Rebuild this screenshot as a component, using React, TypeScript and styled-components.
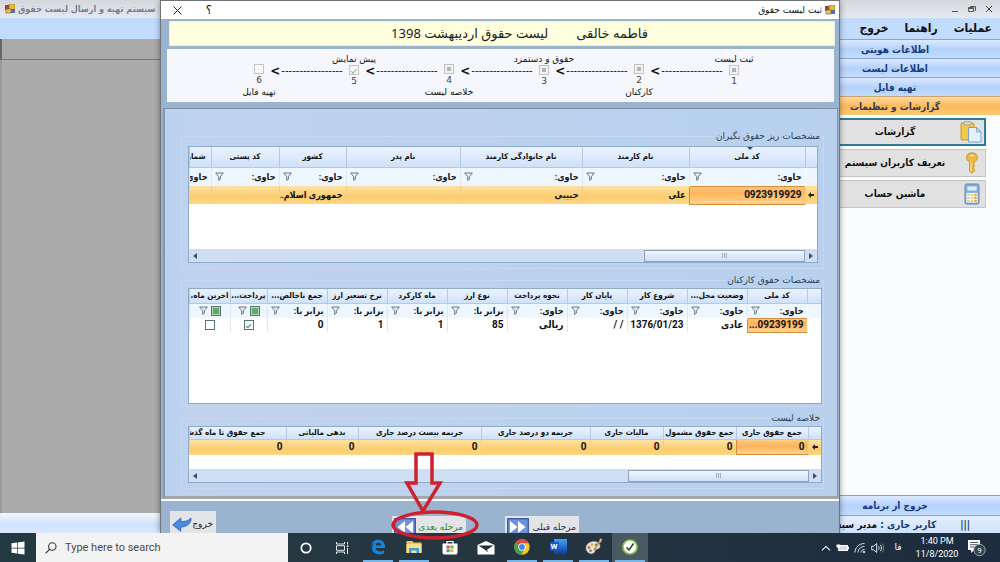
import React from "react";
import styled, { createGlobalStyle, css } from "styled-components";

const Global = createGlobalStyle`
  *, *::before, *::after { box-sizing: border-box; }
  body { margin: 0; font-family: Roboto, "DejaVu Sans", sans-serif; color: #111; overflow: hidden; }
  button, input { font: inherit; color: inherit; margin: 0; padding: 0; border: 0; background: none; }
`;

const boldFamily = `"DejaVu Sans Condensed", "DejaVu Sans", sans-serif`;

/* ---------- Desktop and application window ---------- */

const Desktop = styled.div`
  display: flex;
  flex-direction: column;
  height: 100vh;
`;

const AppWindow = styled.div`
  position: relative;
  flex: 1;
  min-height: 0;
  display: flex;
  flex-direction: column;
  overflow: hidden;
`;

const TitleBar = styled.header`
  display: flex;
  align-items: center;
  justify-content: space-between;
  height: 18px;
  padding: 0 5px;
  background: linear-gradient(#d4d8dd, #e6e9ec);
`;

const AppTitle = styled.h1`
  display: flex;
  align-items: center;
  gap: 3px;
  margin: 0;
  font: bold 9px/16px ${boldFamily};
  color: #75819a;
  white-space: nowrap;
`;

const WindowControls = styled.div`
  display: flex;
  gap: 5px;
`;

const WindowButton = styled.button`
  display: grid;
  place-items: center;
  width: 12px;
  height: 16px;
`;

const MenuBar = styled.nav`
  display: flex;
  gap: 16px;
  height: 21px;
  padding: 0 8px;
  background: #c1dcff;
`;

const MenuItem = styled.button`
  font: bold 12px/21px ${boldFamily};
`;

const AppBody = styled.div`
  display: flex;
  flex: 1;
  min-height: 0;
`;

const MainArea = styled.div`
  flex: 1;
  display: flex;
  flex-direction: column;
`;

const WorkspaceHead = styled.div`
  height: 21px;
  background: #aaa;
  border-left: 2px solid #666;
  border-bottom: 1px solid #777;
`;

const Workspace = styled.div`
  flex: 1;
  background: #ababab;
  border-left: 2px solid #999;
`;

const StatusStrip = styled.div`
  height: 20px;
  background: linear-gradient(#f2f7fe, #cfe2fb 60%, #dbe8fb);
`;

const Sidebar = styled.aside`
  display: flex;
  flex-direction: column;
  width: 210px;
  background: #fbfcfe;
`;

const NavGroup = styled.button<{ $active?: boolean; $tall?: boolean }>`
  height: ${(p) => (p.$tall ? 20 : 19)}px;
  border-top: 1px solid ${(p) => (p.$active ? "#c9a36a" : "#7fa6dc")};
  background: ${(p) =>
    p.$active
      ? "linear-gradient(#fdd9a0, #fcb95b 50%, #fdca74)"
      : "linear-gradient(#dceaff, #b4d2fc 50%, #c3dcff)"};
  font: bold 10px/17px ${boldFamily};
  color: ${(p) => (p.$active ? "#333b5c" : "#1b3a7a")};
`;

const NavItems = styled.div`
  flex: 1;
  display: flex;
  flex-direction: column;
  gap: 3px;
  padding: 3px 14px 0 8px;
`;

const NavItem = styled.button<{ $selected?: boolean }>`
  display: flex;
  align-items: center;
  height: 28px;
  padding: 0 2px 0 30px;
  border: ${(p) => (p.$selected ? "2px solid #2d7a9c" : "1px solid #c4c4c4")};
  background: #e1e1e1;
  font: bold 10px/20px ${boldFamily};

  span {
    flex: 1;
    text-align: center;
    white-space: nowrap;
  }
`;

const UserStatus = styled.div`
  display: flex;
  gap: 24px;
  height: 18px;
  padding: 0 30px;
  background: linear-gradient(#e4effe, #cfe2fb);
  border-top: 1px solid #7fa6dc;
  font: bold 10px/17px ${boldFamily};
  color: #1b3a6a;
  white-space: nowrap;
  overflow: hidden;

  b { color: #111; }
`;

/* ---------- Dialog ---------- */

const Dialog = styled.section`
  position: absolute;
  inset: 0 160px;
  display: flex;
  flex-direction: column;
  overflow: hidden;
  background: #9ab4cf;
  border: solid #6f7478;
  border-width: 1px 1px 0;
  box-shadow: 0 0 6px rgba(0, 0, 0, 0.4);
`;

const DialogTitle = styled.header`
  display: flex;
  align-items: center;
  height: 18px;
  padding: 0 4px;
  background: #fff;
  font: 9px/18px "DejaVu Sans", sans-serif;

  h2 {
    display: flex;
    align-items: center;
    gap: 3px;
    flex: 1;
    margin: 0;
    font: inherit;
  }
`;

const DialogButton = styled.button`
  display: grid;
  place-items: center;
  width: 24px;
  height: 18px;
  margin-left: 8px;
  font-size: 12px;

  &:last-child { margin-left: 0; }
`;

const EmployeeBar = styled.div`
  display: flex;
  gap: 28px;
  height: 25px;
  margin: 2px 4px 3px 8px;
  padding: 0 186px 0 0;
  background: #ffffde;
  border: 1px solid #e8eef0;
  font: 13px/23px "Noto Sans", "DejaVu Sans", sans-serif;
  color: #222;
`;

const Steps = styled.ol`
  display: flex;
  height: 53px;
  margin: 0 5px 6px 6px;
  padding: 4px 89px 0 0;
  list-style: none;
  background: #f5f7fc;
`;

const Step = styled.li<{ $below?: boolean }>`
  display: flex;
  flex-direction: column;
  align-items: center;
  width: 22px;
  padding-top: ${(p) => (p.$below ? 11 : 0)}px;

  label {
    order: ${(p) => (p.$below ? 3 : 0)};
    font: 9px/12px "DejaVu Sans", sans-serif;
    white-space: nowrap;
  }
  small {
    order: 2;
    font: 9px/12px "DejaVu Sans", sans-serif;
    color: #444;
  }
`;

const StepArrow = styled.li`
  display: flex;
  align-items: center;
  justify-content: center;
  gap: 1px;
  direction: ltr;
  width: 73px;
  height: 30px;
  padding-top: 6px;
  font: 10px/12px "DejaVu Sans", sans-serif;
  white-space: nowrap;

  b { font-size: 12px; }
`;

const StepBox = styled.input<{ $state: "partial" | "done" | "empty" }>`
  appearance: none;
  order: 1;
  width: 10px;
  height: 10px;
  flex: none;
  border: 1px solid #c4c4c4;
  background: #f7f7f7;
  ${(p) =>
    p.$state === "partial" &&
    css`
      background: #b4b4b4;
      box-shadow: inset 0 0 0 2px #f2f2f2;
    `}
  ${(p) =>
    p.$state === "done" &&
    css`
      display: grid;
      place-items: center;
      &::after {
        content: "";
        width: 6px;
        height: 3px;
        border: solid #a8a8a8;
        border-width: 0 0 1px 1px;
        transform: rotate(-45deg);
      }
    `}
`;

const Panel = styled.div`
  flex: 1;
  display: flex;
  flex-direction: column;
  gap: 4px;
  margin: 0 1px 0 2px;
  padding: 20px 13px 0 16px;
  border: 1px solid #7c91a8;
  border-left: 2px solid #8796a6;
  border-bottom: 3px solid #a3a7ac;
  background: linear-gradient(90deg, #b9d3ee, #bfd2ee 5%, #b7d1ef 95%, #b9cfec);
`;

const Group = styled.fieldset<{ $wide?: boolean; $bottom: number }>`
  min-width: 0;
  margin: 0;
  padding: 0 ${(p) => (p.$wide ? 1 : 5)}px ${(p) => p.$bottom}px 6px;
  border: 1px solid #c9d6ee;

  legend {
    padding: 0 2px;
    margin-right: ${(p) => (p.$wide ? 0 : -4)}px;
    font: 9px/14px "DejaVu Sans", sans-serif;
    color: #333d4d;
  }
`;

const GridBox = styled.div<{ $height: number; $top: number }>`
  display: flex;
  flex-direction: column;
  min-height: ${(p) => p.$height}px;
  margin-top: ${(p) => p.$top}px;
  overflow: hidden;
  background: #fff;
  border: 1px solid #8fabc9;
`;

const DataTable = styled.table<{ $head: number; $row: number }>`
  width: 100%;
  table-layout: fixed;
  border-collapse: collapse;
  font: bold 10px/12px Roboto, ${boldFamily};

  th, td {
    padding: 0 3px;
    overflow: hidden;
    white-space: nowrap;
    border-left: 1px solid #dfe7f1;
  }
  th {
    height: ${(p) => p.$head}px;
    padding: 0 1px;
    font: bold 8px/12px ${boldFamily};
    text-align: center;
    background: linear-gradient(#eaf3fd, #cfe1f8);
    border-color: #b4c9e3;
    border-bottom: 1px solid #b4c9e3;
  }
  td {
    height: ${(p) => p.$row}px;
    text-align: right;
  }
`;

const FilterRow = styled.tr<{ $height: number }>`
  background: #eef6ff;

  && td { height: ${(p) => p.$height}px; }
`;

const FilterCell = styled.div`
  display: flex;
  align-items: center;
  justify-content: space-between;
  font-size: 9px;

  button { display: grid; }
`;

const DataRow = styled.tr<{ $selected?: boolean }>`
  ${(p) =>
    p.$selected &&
    css`
      background: linear-gradient(#fee2a4, #fccd6e 60%, #fdd685);
      && td { border-left-color: #f9cf80; }
    `}
`;

const ValueText = styled.span`
  font-family: Roboto, ${boldFamily};
  font-size: 9px;
`;

const FocusCell = styled.td`
  &&& {
    border: 1px solid #d98d3a;
    background: linear-gradient(#fdc67a, #fdb45c 40%, #fed391);
  }
`;

const EdgeCell = styled.td`
  && { padding: 0; text-align: center; border-left-color: transparent; }
`;

const ClippedHead = styled.th<{ $start: number }>`
  && { padding: 0 ${(p) => p.$start}px 0 0; text-align: right; }
`;

const GridCheck = styled.input<{ $filled?: boolean }>`
  appearance: none;
  display: inline-grid;
  place-items: center;
  width: 10px;
  height: 10px;
  vertical-align: middle;
  border: 1px solid #55776f;
  background: ${(p) => (p.$filled ? "#5fa96a" : "#fff")};
  box-shadow: ${(p) => (p.$filled ? "inset 0 0 0 1px #b5d9b8" : "none")};

  &:checked::after {
    content: "";
    width: 5px;
    height: 3px;
    border: solid #4c8a5e;
    border-width: 0 0 1px 1px;
    transform: rotate(-45deg);
  }
`;

const CheckCell = styled.td`
  && { text-align: center; }
`;

const CheckFilter = styled.div`
  display: flex;
  justify-content: center;
  align-items: center;
  gap: 3px;

  button { display: grid; }
`;

const SortMark = styled.i`
  position: absolute;
  top: -5px;
  left: 50%;
  border: solid transparent;
  border-width: 3px 3px 0;
  border-top-color: #2c4f80;
`;

const SortLabel = styled.span`
  position: relative;
`;

const ScrollBar = styled.div`
  display: flex;
  align-items: center;
  gap: 4px;
  height: 13px;
  margin-top: auto;
  padding: 0 4px;
  background: #cfdff3;
`;

const ScrollTrack = styled.div`
  flex: 1;
`;

const ScrollThumb = styled.div<{ $width: number }>`
  display: grid;
  place-items: center;
  width: ${(p) => p.$width}%;
  height: 12px;
  border: 1px solid #8ea3bb;
  background: linear-gradient(#f0f6fe, #cfe0f5);

  &::after {
    content: "";
    width: 5px;
    height: 5px;
    background: repeating-linear-gradient(90deg, #9fb0c4 0 1px, #dde8f5 1px 2px);
  }
`;

const DialogFooter = styled.footer`
  display: flex;
  align-items: flex-start;
  height: 34px;
  padding: 15px 260px 0 9px;
  border-top: 2px solid #fff;
  overflow: hidden;
`;

const FooterButton = styled.button<{ $tone?: string; $push?: boolean }>`
  display: flex;
  align-items: center;
  justify-content: space-between;
  flex: none;
  width: 74px;
  height: 22px;
  margin-left: ${(p) => (p.$push ? "auto" : "39px")};
  padding: 0 3px 0 2px;
  background: #e2e4e8;
  font: 9px/20px "DejaVu Sans", sans-serif;
  color: ${(p) => p.$tone || "#2b2f55"};
  white-space: nowrap;
`;

const ExitButton = styled(FooterButton)`
  width: 46px;
  height: 26px;
  margin: -5px 0 0;
  color: #222;
`;

const Annotation = styled.svg`
  position: absolute;
  left: 50%;
  bottom: 20px;
  margin-left: -112px;
  pointer-events: none;
`;

/* ---------- Taskbar ---------- */

const Taskbar = styled.footer`
  position: relative;
  display: flex;
  height: 29px;
  background: linear-gradient(90deg, #233a43, #263640 45%, #1d2c3e);
  color: #fff;
`;

const TaskButton = styled.button<{ $open?: boolean; $current?: boolean }>`
  display: flex;
  flex-direction: column;
  align-items: center;
  width: 36px;
  height: 29px;
  padding: 0 3px;
  background: ${(p) => (p.$current ? "#4b5963" : "none")};

  > :first-child { margin: auto; }

  &::after {
    content: "";
    align-self: stretch;
    height: ${(p) => (p.$open ? 2 : 0)}px;
    background: #76b5e8;
  }
`;

const SearchBox = styled.label`
  display: flex;
  align-items: center;
  gap: 8px;
  width: 252px;
  padding: 0 9px;
  background: #f3f3f3;

  input {
    flex: 1;
    min-width: 0;
    outline: 0;
    font: 11px/20px Roboto, sans-serif;
    color: #444;
  }
  input::placeholder { color: #4a4a4a; opacity: 1; }
`;

const Tray = styled.div`
  display: flex;
  align-items: center;
  gap: 5px;
  margin-left: auto;
  padding-right: 14px;
  font: 9px/13px Roboto, "DejaVu Sans", sans-serif;
`;

const Clock = styled.time`
  width: 50px;
  text-align: center;
`;

const Language = styled.span`
  width: 18px;
  text-align: center;
`;

/* ---------- Icons ---------- */

const FormIcon = () => (
  <svg width="10" height="10" viewBox="0 0 10 10">
    <rect x="0" y="1" width="5" height="5" fill="#a8442c" />
    <rect x="4" y="0" width="6" height="6" fill="#efb92f" stroke="#7a6a3a" strokeWidth="0.6" />
    <rect x="1" y="5" width="5" height="4" fill="#e8c55a" stroke="#5e5a4a" strokeWidth="0.6" />
    <rect x="6" y="5" width="4" height="4" fill="#4f6fb5" />
  </svg>
);

const Funnel = () => (
  <svg width="9" height="9" viewBox="0 0 9 9">
    <path d="M0.7 1h7.6L5.4 4.6v2.6L3.7 8.3V4.6z" fill="#eef4fb" stroke="#56687c" strokeWidth="0.9" />
  </svg>
);

const Tri = ({ left }: { left?: boolean }) => (
  <svg width="4" height="6" viewBox="0 0 4 6">
    <path d={left ? "M4 0v6L0 3z" : "M0 0v6l4-3z"} fill="#3c5068" />
  </svg>
);

const RowMark = () => (
  <svg width="6" height="6" viewBox="0 0 6 6">
    <path d="M3 0L0 3l3 3V4h3V2H3z" fill="#222" />
  </svg>
);

const ClipboardIcon = () => (
  <svg width="22" height="22" viewBox="0 0 22 22">
    <rect x="1" y="2" width="13" height="17" rx="1" fill="#f3c94b" stroke="#b98d2a" strokeWidth="0.8" />
    <rect x="4" y="0.6" width="7" height="3.4" rx="1" fill="#ddd9c8" stroke="#8d8672" strokeWidth="0.6" />
    <path d="M8.500 6.500h8l4.500 4.500v10H8.500z" fill="#e4f1fc" stroke="#6d9dcb" strokeWidth="0.9" />
    <path d="M16.500 6.500v4.500H21z" fill="#b7d6f2" stroke="#6d9dcb" strokeWidth="0.7" />
  </svg>
);

const KeyIcon = () => (
  <svg width="22" height="22" viewBox="0 0 22 22">
    <path d="M11 0.800c-3.400 0-5.500 2-5.500 4.700 0 2 1.200 3.600 3 4.300V19l2.500 2.300 2.300-2.300v-2l-1.300-1 1.300-1.300V13l-1-1 1-1V9.800c2-.7 3.200-2.300 3.200-4.300 0-2.700-2.100-4.700-5.500-4.700z" fill="#f0b93f" stroke="#c08a25" strokeWidth="0.8" />
    <ellipse cx="11" cy="3.600" rx="2.600" ry="1.300" fill="#fff2cf" stroke="#c08a25" strokeWidth="0.5" />
    <path d="M10 10.500V19" stroke="#fbe19a" strokeWidth="1" />
  </svg>
);

const CalculatorIcon = () => (
  <svg width="22" height="22" viewBox="0 0 22 22">
    <rect x="4" y="1" width="14" height="20" rx="1.500" fill="#8cb6de" stroke="#4f7fae" strokeWidth="0.9" />
    <rect x="6" y="3" width="10" height="5" fill="#d8ecfa" stroke="#5f8db8" strokeWidth="0.5" />
    <rect x="5.500" y="10" width="11" height="9.500" fill="#fff" />
    {[0, 1, 2].map((r) =>
      [0, 1, 2].map((c) => (
        <rect key={`${r}${c}`} x={6.2 + c * 3.5} y={10.7 + r * 3} width="2.600" height="2.200" fill={c === 2 ? "#e9a83a" : "#e8cf8a"} />
      ))
    )}
  </svg>
);

const SkipIcon = ({ back }: { back?: boolean }) => (
  <svg width="22" height="18" viewBox="0 0 22 18">
    <rect x="0.700" y="0.700" width="20.600" height="18" fill="#6e93dc" stroke="#2e4fa6" strokeWidth="1.200" />
    <path d={back ? "M11 3v12L3.500 9zM19 3v12l-7.500-6z" : "M3 3v12l7.500-6zM11 3v12l7.500-6z"} fill="#fff" />
  </svg>
);

const ReturnIcon = () => (
  <svg width="22" height="17" viewBox="0 0 22 17">
    <path d="M0.800 9L9.500 1.500v4C14 5.500 18 4.500 20.500 1.500c.8 5-3.500 9.500-11 9.700v4.600z" fill="#4d8ae6" stroke="#2a5cb8" strokeWidth="0.900" />
  </svg>
);

const WindowsLogo = () => (
  <svg width="14" height="14" viewBox="0 0 14 14">
    <path d="M0.500 2.300L6 1.500v5.200H0.500zM6.700 1.400L13.500 0.500v6.200H6.700zM0.500 7.400H6v5.200l-5.500-.8zM6.700 7.400h6.800v6.200l-6.800-.9z" fill="#fff" />
  </svg>
);

const SearchIcon = () => (
  <svg width="12" height="12" viewBox="0 0 12 12">
    <circle cx="7.300" cy="4.500" r="3.700" fill="none" stroke="#333" strokeWidth="1.100" />
    <path d="M4.700 7.200L0.600 11.400" stroke="#333" strokeWidth="1.200" />
  </svg>
);

const CortanaIcon = () => (
  <svg width="12" height="12" viewBox="0 0 12 12">
    <circle cx="6" cy="6" r="4.700" fill="none" stroke="#fff" strokeWidth="1.700" />
  </svg>
);

const TaskViewIcon = () => (
  <svg width="13" height="12" viewBox="0 0 13 12" fill="none" stroke="#e6eaec" strokeWidth="1">
    <path d="M0.500 0v2h8V0M0.500 12v-2h8v2M0.500 3.700h8v4.600h-8zM11.500 0v2.500M11.500 6v6" />
    <rect x="10.800" y="3.500" width="1.600" height="1.600" fill="#fff" stroke="none" />
  </svg>
);

const EdgeIcon = () => (
  <svg width="16" height="16" viewBox="0 0 16 16">
    <path d="M1 7.300C1.500 3.300 4.500 0.700 8.300 0.700c4.300 0 6.700 3 6.700 6.800v1.600H5.600c.1 2.200 2 3.300 4.200 3.300 1.600 0 3-.4 4.200-1.200v3c-1.400.8-3 1.200-4.900 1.200-4.300 0-7-2.500-7-6.300 0-2.300 1.200-4.200 3.200-5.300C3.700 4.200 2.100 5.300 1 7.300zM5.700 6.500h5.400c0-1.700-.9-2.900-2.500-2.900-1.500 0-2.600 1.200-2.900 2.900z" fill="#1684dc" />
  </svg>
);

const ExplorerIcon = () => (
  <svg width="16" height="14" viewBox="0 0 16 14">
    <path d="M0.500 1h6l1 1.500h8V13h-15z" fill="#f1c04f" />
    <path d="M0.500 4h15v9h-15z" fill="#fbdf8b" />
    <path d="M3 8h10v5h-2.500v-2.500h-5V13H3z" fill="#3f9bdc" />
  </svg>
);

const StoreIcon = () => (
  <svg width="16" height="15" viewBox="0 0 16 15">
    <path d="M5 4V1.500h6V4" fill="none" stroke="#fff" strokeWidth="1.200" />
    <path d="M0.500 3.500h15V13l-1 1.500h-13l-1-1.500z" fill="#fff" />
    <path d="M4.500 5.500h3.200v3H4.500z" fill="#e5532d" />
    <path d="M8.300 5.500h3.200v3H8.300z" fill="#7cb82f" />
    <path d="M4.500 9.200h3.200v3H4.500z" fill="#2a9fe0" />
    <path d="M8.300 9.200h3.200v3H8.300z" fill="#f3b62c" />
  </svg>
);

const MailIcon = () => (
  <svg width="18" height="14" viewBox="0 0 18 14">
    <path d="M0.500 4L9 0l8.500 4v9.500h-17z" fill="#fff" />
    <path d="M1.500 4.500h15L10 8.800l1 2.700-2.700-2.600z" fill="#22323c" />
  </svg>
);

const ChromeIcon = () => (
  <svg width="16" height="16" viewBox="0 0 16 16">
    <circle cx="8" cy="8" r="7.700" fill="#f6c62d" />
    <path d="M8 8L1.330 4.150A7.700 7.700 0 0 1 14.670 4.150L8 4.150z" fill="#dd4b3a" />
    <path d="M1.330 4.150A7.700 7.700 0 0 0 7.300 15.670L11 9.500 8 8z" fill="#3aa757" />
    <circle cx="8" cy="8" r="3.700" fill="#fff" />
    <circle cx="8" cy="8" r="2.900" fill="#4687ee" />
  </svg>
);

const WordBox = styled.span`
  display: grid;
  justify-items: start;
  align-items: center;
  width: 17px;
  height: 15px;
  background: linear-gradient(#41a5ee, #2b7cd3 40%, #185abd 70%, #103f91) no-repeat right / 13px 15px;

  b {
    width: 9px;
    height: 9px;
    background: #185abd;
    font: bold 8px/9px Roboto, sans-serif;
    text-align: center;
    color: #fff;
  }
`;

const PaintIcon = () => (
  <svg width="18" height="17" viewBox="0 0 18 17">
    <path d="M1 10c0-4 4-6.500 8-6.500 3.500 0 6 2 6 4.800 0 2-1.500 2.700-3 2.700-1.700 0-1.500 1.500-2.500 3C8.500 15.700 6.700 16 5 15.500 2.500 14.700 1 12.700 1 10z" fill="#e8e3d6" stroke="#aaa28e" strokeWidth="0.500" />
    <circle cx="4" cy="9.500" r="1.300" fill="#d8453a" />
    <circle cx="7" cy="6.700" r="1.300" fill="#e6a82f" />
    <circle cx="11" cy="6.700" r="1.300" fill="#4fa64b" />
    <circle cx="5.500" cy="12.700" r="1.300" fill="#3d7fc9" />
    <path d="M9 12L15 3" stroke="#c5873d" strokeWidth="1.400" />
    <path d="M14 4l1-3.500L17 1l-.5 2.500-1.500 1.500z" fill="#d9b98a" />
  </svg>
);

const CheckAppIcon = () => (
  <svg width="16" height="16" viewBox="0 0 16 16">
    <circle cx="8" cy="8" r="7" fill="#fff" stroke="#8fc456" strokeWidth="1.700" />
    <path d="M4.500 8.300l2.500 2.700L11.500 4.500" fill="none" stroke="#2c4a2a" strokeWidth="1.600" />
  </svg>
);

const ChevronUp = () => (
  <svg width="10" height="6" viewBox="0 0 10 6">
    <path d="M1 5.300L5 1.300l4 4" fill="none" stroke="#e8ecef" strokeWidth="1.200" />
  </svg>
);

const BatteryIcon = () => (
  <svg width="13" height="10" viewBox="0 0 13 10">
    <rect x="2.500" y="2.500" width="9" height="5" fill="#d8dde0" stroke="#fff" />
    <path d="M12.500 3.700v2.600" stroke="#fff" />
    <path d="M0.500 1.500h4v2.500L2.500 5.500 0.500 4z" fill="#fff" />
  </svg>
);

const WifiIcon = () => (
  <svg width="12" height="12" viewBox="0 0 12 12" fill="none" stroke="#dfe4e7" strokeWidth="1">
    <path d="M1 10.500C1 5.500 5 1.500 10.500 1.500M4 10.500c0-3.500 3-6 6.500-6M7 10.500c0-1.800 1.500-3 3.500-3" />
    <circle cx="10" cy="10" r="0.800" fill="#fff" />
  </svg>
);

const SpeakerIcon = () => (
  <svg width="13" height="12" viewBox="0 0 13 12" fill="none" stroke="#dfe4e7" strokeWidth="1">
    <path d="M0.700 4.200h2l3-2.700v9l-3-2.700h-2zM7.500 4.300c.8 1 .8 2.400 0 3.400M9.300 2.800c1.600 1.900 1.600 4.500 0 6.400" />
    <path d="M11 1.500c2.200 2.700 2.200 6.300 0 9" stroke="#7c8994" />
  </svg>
);

const NoticeIcon = () => (
  <svg width="19" height="19" viewBox="0 0 19 19">
    <path d="M1 2h12v10H7l-3 3v-3H1z" fill="#fff" />
    <path d="M3 4.500h8M3 6.700h8M3 9h5" stroke="#26343f" strokeWidth="0.800" />
    <circle cx="12.500" cy="12" r="5.700" fill="#33424e" stroke="#aab3ba" strokeWidth="0.900" />
    <text x="12.500" y="15" fill="#fff" fontSize="8" fontFamily="Roboto, sans-serif" textAnchor="middle">9</text>
  </svg>
);

/* ---------- Pieces built from data ---------- */

const Filter = ({ text }: { text: string }) => (
  <FilterCell>
    <span>{text}</span>
    <button aria-label="فیلتر"><Funnel /></button>
  </FilterCell>
);

const Columns = ({ widths }: { widths: number[] }) => (
  <colgroup>
    {widths.map((w, i) => (
      <col key={i} width={w} />
    ))}
    <col />
  </colgroup>
);

const Scroll = ({ thumb }: { thumb: number }) => (
  <ScrollBar>
    <Tri />
    <ScrollThumb $width={thumb} />
    <ScrollTrack />
    <Tri left />
  </ScrollBar>
);

const steps: { label: string; state: "partial" | "done" | "empty" }[] = [
  { label: "ثبت لیست", state: "partial" },
  { label: "کارکنان", state: "partial" },
  { label: "حقوق و دستمزد", state: "partial" },
  { label: "خلاصه لیست", state: "partial" },
  { label: "پیش نمایش", state: "done" },
  { label: "تهیه فایل", state: "empty" },
];

const payeeHeads = ["نام کارمند", "نام خانوادگی کارمند", "نام پدر", "کشور", "کد پستی"];
const payeeCells = ["علی", "حبیبی", "", "جمهوری اسلام...", "", ""];

const salaryColumns = [
  { head: "وضعیت محل...", filter: "حاوی:", value: "عادی" },
  { head: "شروع کار", filter: "حاوی:", value: "1376/01/23" },
  { head: "پایان کار", filter: "حاوی:", value: "/  /" },
  { head: "نحوه پرداخت", filter: "حاوی:", value: "ریالی" },
  { head: "نوع ارز", filter: "برابر با:", value: "85" },
  { head: "ماه کارکرد", filter: "برابر با:", value: "1" },
  { head: "نرخ تسعیر ارز", filter: "برابر با:", value: "1" },
  { head: "جمع ناخالص...", filter: "برابر با:", value: "0" },
];

const summaryHeads = ["جمع حقوق جاری", "جمع حقوق مشمول", "مالیات جاری", "جریمه دو درصد جاری", "جریمه بیست درصد جاری", "بدهی مالیاتی"];

const PayeeTable = () => (
  <GridBox $height={117} $top={3}>
    <DataTable $head={20} $row={18}>
      <Columns widths={[12, 116, 107, 122, 114, 67, 68]} />
      <thead>
        <tr>
          <th />
          <th><SortLabel><SortMark />کد ملی</SortLabel></th>
          {payeeHeads.map((h) => <th key={h}>{h}</th>)}
          <ClippedHead $start={6}>شمار</ClippedHead>
        </tr>
      </thead>
      <tbody>
        <FilterRow $height={19}>
          <EdgeCell />
          {[0, 1, 2, 3, 4, 5].map((i) => <td key={i}><Filter text="حاوی:" /></td>)}
          <td><FilterCell>حاوی</FilterCell></td>
        </FilterRow>
        <DataRow $selected>
          <EdgeCell><RowMark /></EdgeCell>
          <FocusCell>0923919929</FocusCell>
          {payeeCells.map((c, i) => <td key={i}><ValueText>{c}</ValueText></td>)}
        </DataRow>
      </tbody>
    </DataTable>
    <Scroll thumb={26} />
  </GridBox>
);

const SalaryTable = () => (
  <GridBox $height={116} $top={1}>
    <DataTable $head={14} $row={14}>
      <Columns widths={[14, 60, 60, 60, 60, 60, 60, 60, 60, 60, 37]} />
      <thead>
        <tr>
          <th />
          <th>کد ملی</th>
          {salaryColumns.map((c) => <th key={c.head}>{c.head}</th>)}
          <th>پرداخت...</th>
          <th>اخرین ماه...</th>
        </tr>
      </thead>
      <tbody>
        <FilterRow $height={15}>
          <EdgeCell />
          <td><Filter text="حاوی:" /></td>
          {salaryColumns.map((c) => <td key={c.head}><Filter text={c.filter} /></td>)}
          {["پرداخت", "اخرین ماه"].map((n) => (
            <td key={n}>
              <CheckFilter>
                <GridCheck type="checkbox" $filled aria-label={n} />
                <button aria-label="فیلتر"><Funnel /></button>
              </CheckFilter>
            </td>
          ))}
        </FilterRow>
        <DataRow>
          <EdgeCell />
          <FocusCell>09239199...</FocusCell>
          {salaryColumns.map((c) => <td key={c.head}>{c.value}</td>)}
          <CheckCell><GridCheck type="checkbox" defaultChecked aria-label="پرداخت" /></CheckCell>
          <CheckCell><GridCheck type="checkbox" aria-label="اخرین ماه" /></CheckCell>
        </DataRow>
      </tbody>
    </DataTable>
  </GridBox>
);

const SummaryTable = () => (
  <GridBox $height={57} $top={1}>
    <DataTable $head={12} $row={15}>
      <Columns widths={[13, 72, 73, 73, 109, 123, 72]} />
      <thead>
        <tr>
          <th />
          {summaryHeads.map((h) => <th key={h}>{h}</th>)}
          <ClippedHead $start={20}>جمع حقوق تا ماه گذشت</ClippedHead>
        </tr>
      </thead>
      <tbody>
        <DataRow $selected>
          <EdgeCell><RowMark /></EdgeCell>
          <FocusCell>0</FocusCell>
          {[0, 1, 2, 3, 4, 5].map((i) => <td key={i}>0</td>)}
        </DataRow>
      </tbody>
    </DataTable>
    <Scroll thumb={29} />
  </GridBox>
);

const PayrollDialog = () => (
  <Dialog dir="rtl">
    <DialogTitle>
      <h2><FormIcon />ثبت لیست حقوق</h2>
      <DialogButton aria-label="راهنما">؟</DialogButton>
      <DialogButton aria-label="بستن">
        <svg width="9" height="9" viewBox="0 0 9 9"><path d="M0.500 0.500l8 8M8.500 0.500l-8 8" stroke="#222" /></svg>
      </DialogButton>
    </DialogTitle>
    <EmployeeBar>
      <span>فاطمه خالقی</span>
      <span>لیست حقوق اردیبهشت 1398</span>
    </EmployeeBar>
    <Steps>
      {steps.map((s, i) => (
        <React.Fragment key={s.label}>
          {i > 0 && <StepArrow aria-hidden="true"><b>&lt;</b>-----------------</StepArrow>}
          <Step $below={i % 2 === 1}>
            <StepBox id={`step${i}`} type="checkbox" disabled $state={s.state} />
            <label htmlFor={`step${i}`}>{s.label}</label>
            <small>{i + 1}</small>
          </Step>
        </React.Fragment>
      ))}
    </Steps>
    <Panel>
      <Group $bottom={5}>
        <legend>مشخصات ریز حقوق بگیران</legend>
        <PayeeTable />
      </Group>
      <Group $bottom={2} $wide>
        <legend>مشخصات حقوق کارکنان</legend>
        <SalaryTable />
      </Group>
      <Group $bottom={5} $wide>
        <legend>خلاصه لیست</legend>
        <SummaryTable />
      </Group>
    </Panel>
    <DialogFooter>
      <FooterButton>مرحله قبلی<SkipIcon /></FooterButton>
      <FooterButton $tone="#2f8a2f" $push>مرحله بعدی<SkipIcon back /></FooterButton>
      <ExitButton>خروج<ReturnIcon /></ExitButton>
    </DialogFooter>
  </Dialog>
);

export default function App() {
  return (
    <Desktop>
      <Global />
      <AppWindow>
        <TitleBar>
          <AppTitle><FormIcon /><span dir="rtl">سیستم تهیه و ارسال لیست حقوق</span></AppTitle>
          <WindowControls>
            <WindowButton aria-label="کوچک"><svg width="8" height="8"><path d="M1 6.500h6" stroke="#555" /></svg></WindowButton>
            <WindowButton aria-label="بازگردانی"><svg width="8" height="8"><path d="M2.500 2.500v-1h5v4h-1M0.500 2.500h5v4h-5zM0.500 3.500h5" fill="none" stroke="#555" /></svg></WindowButton>
            <WindowButton aria-label="بستن"><svg width="8" height="8"><path d="M1 1l6 6M7 1l-6 6" stroke="#444" /></svg></WindowButton>
          </WindowControls>
        </TitleBar>
        <MenuBar dir="rtl">
          <MenuItem>عملیات</MenuItem>
          <MenuItem>راهنما</MenuItem>
          <MenuItem>خروج</MenuItem>
        </MenuBar>
        <AppBody>
          <MainArea>
            <WorkspaceHead />
            <Workspace />
            <StatusStrip />
          </MainArea>
          <Sidebar dir="rtl">
            <NavGroup>اطلاعات هویتی</NavGroup>
            <NavGroup>اطلاعات لیست</NavGroup>
            <NavGroup>تهیه فایل</NavGroup>
            <NavGroup $active>گزارشات و تنظیمات</NavGroup>
            <NavItems>
              <NavItem $selected><ClipboardIcon /><span>گزارشات</span></NavItem>
              <NavItem><KeyIcon /><span>تعریف کاربران سیستم</span></NavItem>
              <NavItem><CalculatorIcon /><span>ماشین حساب</span></NavItem>
            </NavItems>
            <NavGroup $tall>خروج از برنامه</NavGroup>
            <UserStatus><span>|||</span><span>کاربر جاری : <b>مدیر سیستم</b></span></UserStatus>
          </Sidebar>
        </AppBody>
        <PayrollDialog />
      </AppWindow>
      <Taskbar>
        <TaskButton aria-label="Start"><WindowsLogo /></TaskButton>
        <SearchBox>
          <SearchIcon />
          <input placeholder="Type here to search" aria-label="Search" />
        </SearchBox>
        <TaskButton aria-label="Cortana"><CortanaIcon /></TaskButton>
        <TaskButton aria-label="Task View"><TaskViewIcon /></TaskButton>
        <TaskButton aria-label="Edge" $open><EdgeIcon /></TaskButton>
        <TaskButton aria-label="Explorer" $open><ExplorerIcon /></TaskButton>
        <TaskButton aria-label="Store"><StoreIcon /></TaskButton>
        <TaskButton aria-label="Mail"><MailIcon /></TaskButton>
        <TaskButton aria-label="Chrome" $open><ChromeIcon /></TaskButton>
        <TaskButton aria-label="Word" $open><WordBox><b>W</b></WordBox></TaskButton>
        <TaskButton aria-label="Paint" $open><PaintIcon /></TaskButton>
        <TaskButton aria-label="Payroll" $open $current><CheckAppIcon /></TaskButton>
        <Tray>
          <ChevronUp />
          <BatteryIcon />
          <WifiIcon />
          <SpeakerIcon />
          <Language>فا</Language>
          <Clock>1:40 PM<br />11/8/2020</Clock>
          <NoticeIcon />
        </Tray>
        <Annotation width="92" height="92" viewBox="0 0 92 92" fill="none" stroke="#cf2030" strokeWidth="3.5">
          <ellipse cx="47" cy="75" rx="42" ry="13" />
          <path d="M28 4h16v29h8L35 61 19 33h9z" />
        </Annotation>
      </Taskbar>
    </Desktop>
  );
}
